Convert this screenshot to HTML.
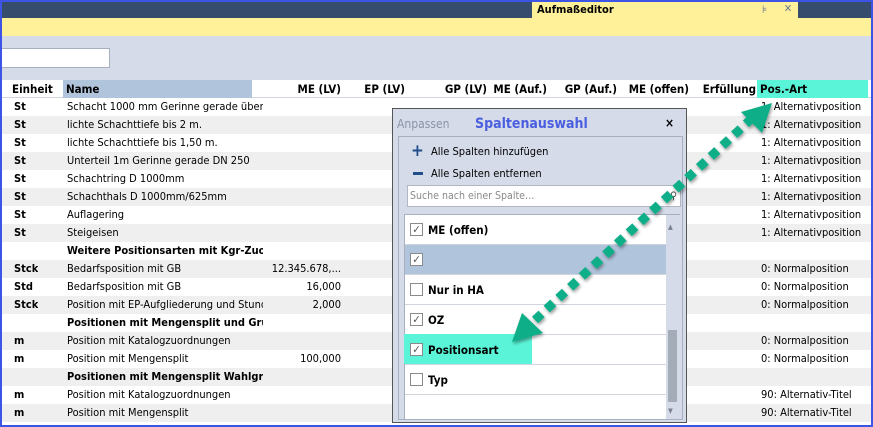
<!DOCTYPE html>
<html><head><meta charset="utf-8"><style>
*{margin:0;padding:0;box-sizing:border-box}
body{width:873px;height:427px;overflow:hidden;font-family:"DejaVu Sans Condensed","DejaVu Sans",sans-serif;font-size:11px;color:#000;background:#fff;position:relative}
.abs{position:absolute}
.frame{position:absolute;left:0;top:0;width:873px;height:427px;border:2px solid #3d55e6;pointer-events:none;z-index:20}
.row{position:absolute;left:0;width:873px;height:18px;line-height:18px}
.row span{position:absolute;white-space:nowrap;overflow:hidden}
.b{font-weight:bold}
.hd span{position:absolute;font-weight:bold;line-height:18px;top:0;font-size:11.5px}
</style></head><body>
<div class="abs" style="left:0;top:0;width:873px;height:18px;background:#364d6d"></div>
<div class="abs" style="left:532px;top:0;width:246px;height:18px;background:#fff09a;font-weight:bold;line-height:20px;padding-left:5px">Aufmaßeditor<span style="position:absolute;left:230px;color:#6a7990;font-weight:normal">⊧</span></div>
<div class="abs" style="left:778px;top:0;width:20px;height:18px;background:#fff09a;line-height:18px;color:#6a7990;text-align:center">✕</div>
<div class="abs" style="left:0;top:18px;width:873px;height:18px;background:#fff09a"></div>
<div class="abs" style="left:0;top:36px;width:873px;height:44px;background:#d5dbe8"></div>
<div class="abs" style="left:0;top:48px;width:110px;height:20px;background:#fff;border:1px solid #a8b0c0"></div>
<div class="abs hd" style="left:0;top:80px;width:873px;height:18px;background:#fff;border-bottom:1px solid #d0d4dc">
<span style="left:12px">Einheit</span>
<div class="abs" style="left:63px;top:0;width:189px;height:18px;background:#b0c4dc"></div>
<span style="left:66px">Name</span>
<span style="right:532px">ME (LV)</span>
<span style="right:468px">EP (LV)</span>
<span style="right:386px">GP (LV)</span>
<span style="right:326px">ME (Auf.)</span>
<span style="right:256px">GP (Auf.)</span>
<span style="right:184px">ME (offen)</span>
<span style="right:117px">Erfüllung</span>
<div class="abs" style="left:757px;top:0;width:111px;height:18px;background:#5af5d8"></div>
<span style="left:760px">Pos.-Art</span>
</div>
<div id="rows"></div>
<script>
var d=[["St","Schacht 1000 mm Gerinne gerade über 2","","1: Alternativposition"],["St","lichte Schachttiefe bis 2 m.","","1: Alternativposition"],["St","lichte Schachttiefe bis 1,50 m.","","1: Alternativposition"],["St","Unterteil 1m Gerinne gerade DN 250","","1: Alternativposition"],["St","Schachtring D 1000mm","","1: Alternativposition"],["St","Schachthals D 1000mm/625mm","","1: Alternativposition"],["St","Auflagering","","1: Alternativposition"],["St","Steigeisen","","1: Alternativposition"],["","*Weitere Positionsarten mit Kgr-Zuordnung","",""],["Stck","Bedarfsposition mit GB","12.345.678,...","0: Normalposition"],["Std","Bedarfsposition mit GB","16,000","0: Normalposition"],["Stck","Position mit EP-Aufgliederung und Stunden","2,000","0: Normalposition"],["","*Positionen mit Mengensplit  und Gruppe","",""],["m","Position mit Katalogzuordnungen","","0: Normalposition"],["m","Position mit Mengensplit","100,000","0: Normalposition"],["","*Positionen mit Mengensplit  Wahlgruppe","",""],["m","Position mit Katalogzuordnungen","","90: Alternativ-Titel"],["m","Position mit Mengensplit","","90: Alternativ-Titel"]];
var h="";d.forEach(function(r,i){var n=r[1],bb=n[0]=="*";if(bb)n=n.slice(1);
h+='<div class="row" style="top:'+(98+i*18)+'px;background:'+(i%2?'#efefef':'#fff')+'"><span class="b" style="left:14px">'+r[0]+'</span><span style="left:67px;width:196px;'+(bb?'font-weight:bold':'')+'">'+n+'</span><span style="right:532px">'+r[2]+'</span><span style="left:761px">'+r[3]+'</span></div>'});
document.getElementById('rows').innerHTML=h;
</script>
<div class="abs" style="left:392px;top:108px;width:295px;height:315px;background:#d5dbe8;border:1px solid #555;z-index:5">
<div class="abs" style="left:4px;top:8px;color:#8a94a8;font-size:12px">Anpassen</div>
<div class="abs" style="left:82px;top:7px;color:#4a5ee0;font-weight:bold;font-size:14px">Spaltenauswahl</div>
<div class="abs" style="left:272px;top:7px;font-weight:bold;font-size:12px">×</div>
<div class="abs" style="left:5px;top:27px;width:285px;height:284px;border:1px solid #a8b0c0"></div>
<div class="abs" style="left:18px;top:34px;color:#1f4e8a;font-weight:bold;font-size:17px;line-height:16px">+</div>
<div class="abs" style="left:38px;top:36px">Alle Spalten hinzufügen</div>
<div class="abs" style="left:20px;top:63px;width:10px;height:3px;background:#1f4e8a"></div>
<div class="abs" style="left:38px;top:58px">Alle Spalten entfernen</div>
<div class="abs" style="left:14px;top:76px;width:274px;height:22px;background:#fff;border:1px solid #b0b6c2;color:#8a8a8a;line-height:20px;padding-left:2px;font-size:10.5px">Suche nach einer Spalte…<span style="position:absolute;right:3px;color:#444">⚲</span></div>
<div class="abs" style="left:11px;top:105px;width:276px;height:206px;background:#fff;border:1px solid #a8b0c0"></div>
<div class="abs" style="left:273px;top:106px;width:14px;height:204px;background:#d5dbe8"></div>
<div class="abs" style="left:275px;top:221px;width:9px;height:72px;background:#a4acb8"></div>
<div class="abs" style="left:275px;top:114px;color:#7a8290;font-size:7px">▲</div>
<div class="abs" style="left:275px;top:298px;color:#7a8290;font-size:7px">▼</div>
<div id="lst"></div>
</div>
<script>
var it=[["ME (offen)",1],["",1],["Nur in HA",0],["OZ",1],["Positionsart",1],["Typ",0]];var s="";
it.forEach(function(t,i){var y=106+i*30;var bg=i==1?'#b0c4dc':'#fff';
s+='<div class="abs" style="left:12px;top:'+y+'px;width:261px;height:30px;background:'+bg+';border-bottom:1px solid #d0d4dc"></div>';
if(i==4)s+='<div class="abs" style="left:11px;top:'+(y-1)+'px;width:128px;height:30px;background:#5af5d8"></div>';
s+='<div class="abs" style="left:17px;top:'+(y+8)+'px;width:13px;height:13px;border:1px solid #8a8a8a;background:#fff;font-size:11px;line-height:11px;text-align:center;color:#555">'+(t[1]?'✓':'')+'</div>';
s+='<div class="abs" style="left:35px;top:'+(y+8)+'px;font-weight:bold;font-size:11.5px">'+t[0]+'</div>';});
document.getElementById('lst').innerHTML=s;
</script>
<svg class="abs" style="left:0;top:0;z-index:10" width="873" height="427">
<defs><filter id="sh"><feDropShadow dx="1" dy="2" stdDeviation="1.5" flood-opacity="0.4"/></filter></defs>
<g filter="url(#sh)" fill="#0fae88">
<line x1="535" y1="320" x2="750" y2="120" stroke="#0fae88" stroke-width="9" stroke-dasharray="9 7"/>
<polygon points="512,342 522,313 543,333"/>
<polygon points="772,103 741,112 762,133"/>
</g></svg>
<div class="frame"></div>
</body></html>
